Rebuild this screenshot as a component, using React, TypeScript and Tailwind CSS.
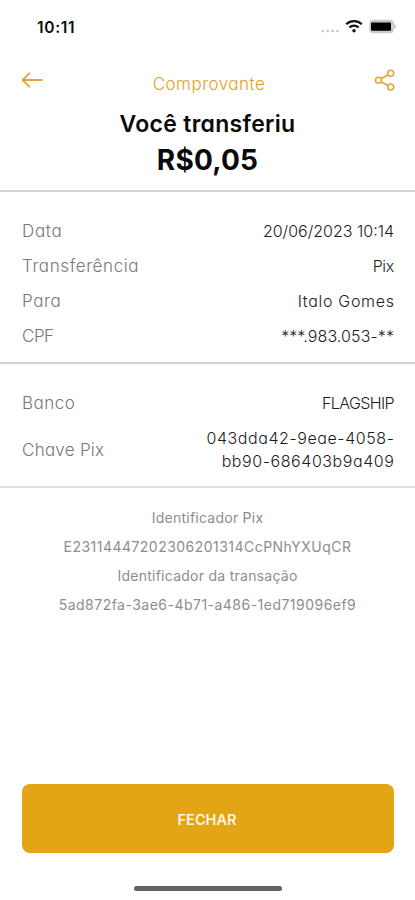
interface ReceiptRow {
  label: string;
  value: string[];
  labelClass: string;
  valueClass: string;
}

const TRANSFER_ROWS: ReceiptRow[] = [
  { label: "Data", value: ["20/06/2023 10:14"], labelClass: "tracking-[0.7px]", valueClass: "tracking-[0px]" },
  { label: "Transferência", value: ["Pix"], labelClass: "tracking-[0.6px]", valueClass: "tracking-[-0.3px]" },
  { label: "Para", value: ["Italo Gomes"], labelClass: "tracking-[0.6px]", valueClass: "tracking-[0.7px] -mr-[0.7px]" },
  { label: "CPF", value: ["***.983.053-**"], labelClass: "tracking-[-0.5px]", valueClass: "tracking-[0.1px]" },
];

const BANK_ROWS: ReceiptRow[] = [
  { label: "Banco", value: ["FLAGSHIP"], labelClass: "tracking-[0.5px]", valueClass: "tracking-[-0.6px]" },
  {
    label: "Chave Pix",
    value: ["043dda42-9eae-4058-", "bb90-686403b9a409"],
    labelClass: "tracking-[0.25px]",
    valueClass: "tracking-[0.57px] -mr-[0.5px]",
  },
];

const IDENTIFIERS = [
  { text: "Identificador Pix", className: "tracking-[0.25px]" },
  { text: "E23114447202306201314CcPNhYXUqCR", className: "tracking-[0.47px]" },
  { text: "Identificador da transação", className: "tracking-[0.26px]" },
  { text: "5ad872fa-3ae6-4b71-a486-1ed719096ef9", className: "tracking-[0.48px]" },
];

function StatusBar() {
  return (
    <div className="flex h-[54px] items-center justify-between pr-[18px] pl-[37px]">
      <span className="pt-0.5 text-[15.5px] font-semibold tracking-[0.7px]">10:11</span>
      <div className="flex items-center">
        <svg width="20" height="14" viewBox="0 0 20 14" fill="#c6c6c6">
          <circle cx="2.8" cy="11" r="1.3" />
          <circle cx="7.7" cy="11" r="1.3" />
          <circle cx="12.6" cy="11" r="1.3" />
          <circle cx="17.5" cy="11" r="1.3" />
        </svg>
        <svg className="-mt-0.5 ml-[5px]" width="18" height="14" viewBox="0 0 18 14" fill="none" stroke="#111" strokeWidth="2.2">
          <path d="M1.2 5.2a11.2 11.2 0 0 1 15.6 0" />
          <path d="M4.4 8.5a6.6 6.6 0 0 1 9.2 0" />
          <circle cx="9" cy="11.7" r="1.7" fill="#111" stroke="none" />
        </svg>
        <svg className="-mt-px ml-1.5" width="28" height="15" viewBox="0 0 28 15">
          <rect x="0.3" y="0.8" width="24.5" height="13.4" rx="4" fill="#cbcbcb" />
          <rect x="2" y="3.5" width="20" height="8.3" rx="1" fill="#000" />
          <path d="M25.3 5.3v4.4c1.6-.5 1.6-3.9 0-4.4z" fill="#999" />
        </svg>
      </div>
    </div>
  );
}

function Header() {
  return (
    <header className="flex h-[138px] flex-col border-b-2 border-[#d2d2d2]">
      <div className="flex h-[52px] items-center justify-between pr-[19px] pl-[21px] text-[#e3a53a]">
        <svg
          className="-mt-px"
          width="23"
          height="18"
          viewBox="0 0 23 18"
          fill="none"
          stroke="currentColor"
          strokeWidth="1.8"
          strokeLinecap="round"
          strokeLinejoin="round"
        >
          <path d="M21 9H1.5M8.3 2.3L1.5 9l6.8 6.7" />
        </svg>
        <h1 className="pt-[7px] text-[17px] leading-6 font-light tracking-[0.5px] text-[#e2a02c]">Comprovante</h1>
        <svg className="-mt-px" width="22" height="22" viewBox="0 0 22 22" fill="none" stroke="currentColor" strokeWidth="1.6">
          <circle cx="4.5" cy="11.3" r="3" />
          <circle cx="16.7" cy="4.2" r="3" />
          <circle cx="16.7" cy="18" r="3" />
          <path d="M7.1 9.8l7-4.1M7.1 12.8l7 3.700" />
        </svg>
      </div>
      <p className="mt-1 text-center text-[23px] leading-7 font-semibold tracking-[0.3px]">Você transferiu</p>
      <p className="text-center text-[28px] leading-[45px] font-bold tracking-[0.2px]">R$0,05</p>
    </header>
  );
}

function Row({ label, value, labelClass, valueClass }: ReceiptRow) {
  return (
    <div className="flex items-center justify-between py-1.5 leading-[23px] font-light">
      <dt className={`text-[17px] text-[#777] ${labelClass}`}>{label}</dt>
      <dd className={`text-right text-base leading-[23px] text-[#1c1c1c] ${valueClass}`}>
        {value.map((line) => (
          <span key={line} className="block">
            {line}
          </span>
        ))}
      </dd>
    </div>
  );
}

export default function App() {
  return (
    <main className="flex h-[900px] w-[415px] flex-col bg-white font-['Inter','Liberation_Sans',sans-serif] text-[#0a0a0a] [font-feature-settings:'cv11']">
      <StatusBar />
      <Header />
      <dl className="h-[172px] border-b-2 border-[#d2d2d2] pt-[22px] pr-[21px] pl-[22px]">
        {TRANSFER_ROWS.map((row) => (
          <Row key={row.label} {...row} />
        ))}
      </dl>
      <dl className="h-[124px] border-b-2 border-[#dedede] pt-[22px] pr-[21px] pl-[22px]">
        {BANK_ROWS.map((row) => (
          <Row key={row.label} {...row} />
        ))}
      </dl>
      <div className="flex flex-col items-center pt-[15px] text-[14px] leading-[29px] text-[#8d8d8d] [font-feature-settings:normal]">
        {IDENTIFIERS.map(({ text, className }) => (
          <p key={text} className={className}>
            {text}
          </p>
        ))}
      </div>
      <div className="mt-auto pr-[21px] pl-[22px]">
        <button className="h-[69px] w-full rounded-lg bg-[#e1a516] pt-0.5 pr-0.5 text-[14.5px] font-semibold text-[#fff7e2]">
          FECHAR
        </button>
      </div>
      <div className="mx-auto mt-[33px] mb-[9px] h-[5px] w-[148px] rounded-full bg-[#636363]" />
    </main>
  );
}
